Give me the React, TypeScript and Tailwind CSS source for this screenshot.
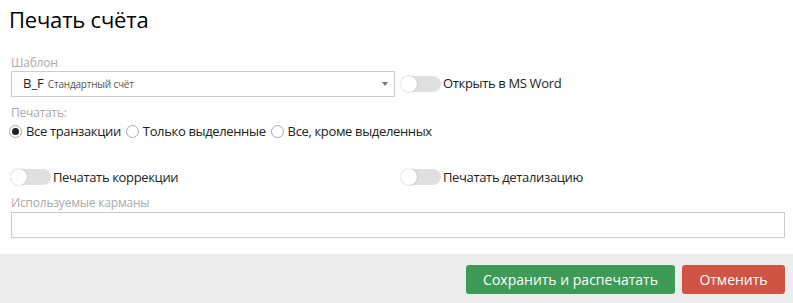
const font = { fontFamily: '"Open Sans", "Noto Sans", sans-serif' };

function Toggle({ label }: { label: string }) {
  return (
    <div className="flex items-center">
      <span className="relative inline-block h-[16px] w-[40px] rounded-full bg-[#e0e0e0]">
        <span className="absolute left-0 top-0 h-[16px] w-[16px] rounded-full bg-white shadow-[0_0_2px_rgba(0,0,0,0.25)]" />
      </span>
      <span className="ml-[2px] text-[13px] tracking-[-0.35px] text-[#222]">{label}</span>
    </div>
  );
}

function Radio({ label, checked }: { label: string; checked?: boolean }) {
  return (
    <label className="flex items-center gap-[4px] text-[13px] tracking-[-0.35px] text-[#222]">
      <span className="flex h-[13px] w-[13px] items-center justify-center rounded-full border border-[#aaa] bg-white">
        {checked && <span className="h-[7px] w-[7px] rounded-full bg-[#222]" />}
      </span>
      {label}
    </label>
  );
}

export default function App() {
  return (
    <div className="flex h-[303px] w-[793px] flex-col bg-white" style={font}>
      <div className="px-[9px] pt-[3px]">
        <h1 className="text-[22px] leading-[32px] tracking-[-0.2px] text-black">Печать счёта</h1>

        <div className="mt-[20px] pl-[2px] text-[12px] leading-[16px] tracking-[-0.2px] text-[#aaa]">Шаблон</div>
        <div className="flex items-center">
          <div className="ml-[2px] flex h-[26px] w-[384px] items-center border border-[#ccc] pl-[11px] pr-[6px]">
            <span className="text-[13px] text-[#222]">B_F</span>
            <span className="ml-[4px] text-[10px] tracking-[-0.2px] text-[#555]">Стандартный счёт</span>
            <span className="ml-auto h-0 w-0 border-x-[3px] border-t-[4px] border-x-transparent border-t-[#777]" />
          </div>
          <div className="ml-[6px]">
            <Toggle label="Открыть в MS Word" />
          </div>
        </div>

        <div className="mt-[8px] pl-[2px] text-[12px] leading-[16px] tracking-[-0.2px] text-[#aaa]">Печатать:</div>
        <div className="mt-[1px] flex items-center gap-[5px]">
          <Radio label="Все транзакции" checked />
          <Radio label="Только выделенные" />
          <Radio label="Все, кроме выделенных" />
        </div>

        <div className="mt-[26px] flex items-center pl-[2px]">
          <div className="w-[390px]">
            <Toggle label="Печатать коррекции" />
          </div>
          <Toggle label="Печатать детализацию" />
        </div>

        <div className="mt-[8px] pl-[2px] text-[12px] leading-[16px] tracking-[-0.2px] text-[#aaa]">Используемые карманы</div>
        <div className="ml-[2px] mt-[1px] h-[26px] w-[774px] border border-[#ccc]" />
      </div>

      <div className="mt-auto flex h-[49px] items-start justify-end gap-[7px] bg-[#ededed] pr-[8px] pt-[11px]">
        <button className="h-[29px] w-[209px] rounded-[3px] bg-[#3e9a57] text-[14px] text-white">
          Сохранить и распечатать
        </button>
        <button className="h-[29px] w-[103px] rounded-[3px] bg-[#d05443] text-[14px] text-white">
          Отменить
        </button>
      </div>
    </div>
  );
}
